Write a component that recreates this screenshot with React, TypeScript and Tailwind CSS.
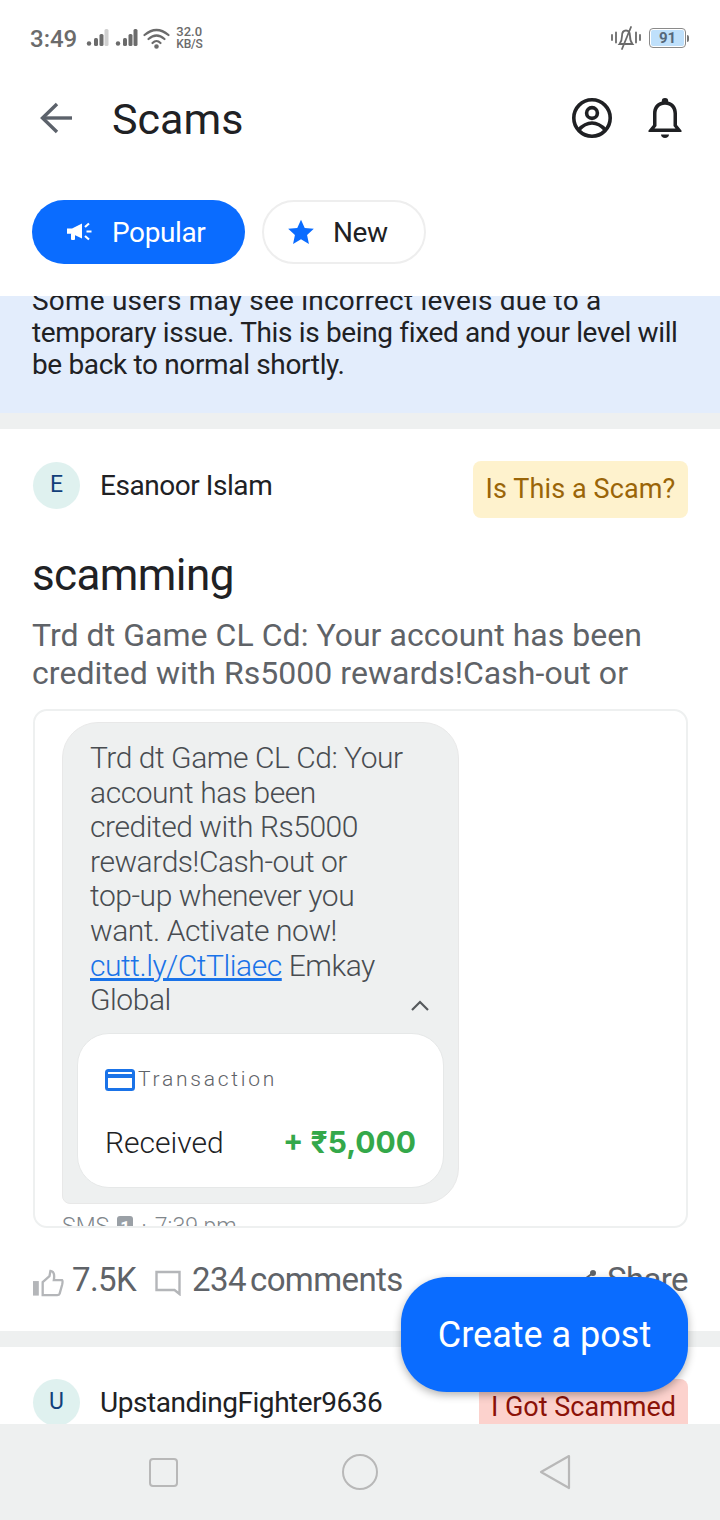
// App.tsx - Scams feed screen

function SignalBars({ dim }: { dim?: boolean }) {
  return (
    <svg width="23" height="18" viewBox="0 0 23 18" fill="none">
      <circle cx="3" cy="14.5" r="2.2" fill="#6b6b6b" />
      <rect x="8" y="9" width="4" height="8" rx="1.5" fill="#6b6b6b" />
      <rect x="13.5" y="5" width="4" height="12" rx="1.5" fill="#6b6b6b" />
      <rect x="18.5" y="0" width="4" height="17" rx="1.5" fill={dim ? "#d0d0d0" : "#6b6b6b"} />
    </svg>
  );
}

function StatusBar() {
  return (
    <div className="h-[76px] shrink-0 flex items-center justify-between pl-[30px] pr-[31px] text-[#6b6b6b]">
      <div className="flex items-center">
        <span className="text-[24px] font-medium mt-[1px]">3:49</span>
        <div className="ml-[9px]"><SignalBars dim /></div>
        <div className="ml-[6px]"><SignalBars /></div>
        <svg className="ml-[5px]" width="27" height="21" viewBox="0 0 27 21" fill="none" stroke="#6b6b6b" strokeWidth="2.2" strokeLinecap="round">
          <path d="M1.5 7 Q13.5 -3 25.5 7" />
          <path d="M5.5 11 Q13.5 4 21.5 11" />
          <path d="M9.5 15 Q13.5 11 17.5 15" />
          <circle cx="13.5" cy="18.5" r="1.2" fill="#6b6b6b" />
        </svg>
        <div className="ml-[6px] flex flex-col items-start text-[13px] font-medium leading-[13px]">
          <span>32.0</span>
          <span className="text-[12px] tracking-[-0.2px]">KB/S</span>
        </div>
      </div>
      <div className="flex items-center">
        <svg width="30" height="24" viewBox="0 0 30 24" fill="none" stroke="#6b6b6b" strokeWidth="1.8" strokeLinecap="round">
          <path d="M1 9v5M5 6.5v10M25 6.5v10M29 9v5" />
          <path d="M8.5 18 Q11 15 11 10 Q11 4.5 15 4.5 Q19 4.5 19 10 Q19 15 21.5 18 Z" />
          <path d="M20 1 L11 23" />
        </svg>
        <div className="ml-[8px] w-[37px] h-[20px] rounded-[4px] border border-[#8a8a8a] p-[1px]">
          <div className="w-full h-full rounded-[2px] bg-[#bfe0fb] flex items-center justify-center text-[15px] font-bold text-[#56687a] leading-none">91</div>
        </div>
        <div className="ml-[1px] w-[2px] h-[7px] bg-[#777] rounded-r" />
      </div>
    </div>
  );
}

function Header() {
  return (
    <div className="h-[84px] shrink-0 flex items-center pl-[39px] pr-[38px]">
      <svg width="34" height="34" viewBox="0 0 34 34" fill="none" stroke="#5c626b" strokeWidth="3.4">
        <path d="M33 17H4" />
        <path d="M18 3 L3.5 17 L18 31" />
      </svg>
      <h1 className="ml-[39px] mt-[3px] text-[43px] text-[#202124] font-normal leading-none">Scams</h1>
      <div className="ml-auto flex items-center gap-[36px]">
        <svg width="42" height="42" viewBox="0 0 42 42" fill="none" stroke="#1f2023" strokeWidth="3.6" className="ml-px">
          <circle cx="21" cy="21" r="18.2" />
          <circle cx="21" cy="16" r="5.4" />
          <path d="M7.5 33 Q14 26 21 26 Q28 26 34.5 33" />
        </svg>
        <svg width="34" height="42" viewBox="0 0 34 42" fill="#1f2023" className="-ml-[1px]">
          <path fillRule="evenodd" d="M17 1a3.2 3.2 0 0 1 3.2 3.4C26.5 6 29 11 29 16.5V28l4.5 5.500v1.500H.5v-1.500L5 28V16.500C5 11 7.500 6 13.800 4.400A3.200 3.200 0 0 1 17 1Zm0 6.700c-5.800 0-8.500 4-8.500 9V29l-2 2.500h21l-2-2.500V16.700c0-5-2.700-9-8.500-9Z" />
          <path d="M13 37.500h8c0 2-1.800 3.500-4 3.500s-4-1.500-4-3.500Z" />
        </svg>
      </div>
    </div>
  );
}

function Tabs() {
  return (
    <div className="h-[136px] shrink-0 pt-[40px] pl-[32px] flex items-start gap-[17px]">
      <button className="w-[213px] h-[64px] rounded-full bg-[#0a6cff] text-white flex items-center pl-[34px] text-[28px] tracking-[-0.4px]">
        <svg width="28" height="24" viewBox="0 0 28 24" fill="white">
          <path d="M1 8.500h5l10-5v15l-10-4.800H1Z" />
          <rect x="5" y="13" width="4" height="7" rx="1" />
          <path d="M19 7 L23 3.500M20.500 11.500h5M19 16 L23 19.500" stroke="white" strokeWidth="2.200" fill="none" />
        </svg>
        <span className="ml-[18px] mt-[2px]">Popular</span>
      </button>
      <button className="w-[164px] h-[64px] rounded-full bg-white border-2 border-[#eeeeee] flex items-center pl-[22px] text-[28px] tracking-[-0.4px] text-[#202124]">
        <svg width="30" height="28" viewBox="0 0 24 24" fill="#0a6cff">
          <path d="M12 1.500l3.200 7 7.800.8-5.800 5.200 1.600 7.700L12 18.300l-6.800 3.900 1.600-7.700L1 9.300l7.800-.8Z" />
        </svg>
        <span className="ml-[17px] mt-[2px]">New</span>
      </button>
    </div>
  );
}

function Avatar({ letter }: { letter: string }) {
  return (
    <div className="w-[47px] h-[47px] shrink-0 rounded-full bg-[#dff1ef] flex items-center justify-center text-[23px] text-[#123f7a]">
      {letter}
    </div>
  );
}

function ScamPost() {
  return (
    <div className="bg-white px-[32px] pt-[32px] pb-[31px]">
      <div className="flex items-start">
        <div className="mt-[1px] ml-px"><Avatar letter="E" /></div>
        <span className="ml-[20px] mt-[7px] text-[28px] leading-[36px] tracking-[-0.45px] text-[#202124]">Esanoor Islam</span>
        <span className="ml-auto w-[215px] h-[57px] rounded-[8px] bg-[#fef2cd] text-[#9a6508] text-[27px] tracking-[0.1px] flex items-center justify-center">Is This a Scam?</span>
      </div>
      <h2 className="mt-[30px] text-[44px] leading-[54px] tracking-[-0.6px] text-[#202124] font-normal">scamming</h2>
      <p className="mt-[14px] text-[32px] leading-[38px] tracking-[0.04px] text-[#5f6368]">
        Trd dt Game CL Cd: Your account has been credited with Rs5000 rewards!Cash-out or
      </p>
      <div className="mt-[17px] ml-px h-[519px] overflow-hidden rounded-[14px] border-2 border-[#eef0f0] pl-[27px] pt-[11px]">
        <div className="w-[397px] h-[482px] rounded-[36px] rounded-bl-[8px] bg-[#eef0f0] border border-[#e8e8e8] px-[14px] pt-[18px]">
          <p className="pl-[13px] pr-[28px] font-['Roboto'] font-light text-[30px] leading-[34.6px] tracking-[-0.45px] text-[#484c50]">
            Trd dt Game CL Cd: Your account has been credited with Rs5000 rewards!Cash-out or <span className="whitespace-nowrap">top-up</span> whenever you want. Activate now!{" "}
            <span className="text-[#1a73e8] underline">cutt.ly/CtTliaec</span> Emkay Global
          </p>
          <div className="flex justify-end pr-[14px] -mt-[19px]">
            <svg width="20" height="12" viewBox="0 0 20 12" fill="none" stroke="#55595c" strokeWidth="2.200">
              <path d="M2 11 L10 3 L18 11" />
            </svg>
          </div>
          <div className="mt-[22px] h-[155px] rounded-[32px] bg-white border border-[#e6e8e8] px-[27px] pt-[30px]">
            <div className="flex items-center">
              <svg width="30" height="22" viewBox="0 0 30 22">
                <rect x="1.500" y="1.500" width="27" height="19" rx="2" fill="white" stroke="#1a73e8" strokeWidth="3" />
                <rect x="1.500" y="5" width="27" height="4" fill="#1a73e8" />
              </svg>
              <span className="ml-[3px] font-['Roboto'] font-light text-[21px] tracking-[2.750px] text-[#5f6368]">Transaction</span>
            </div>
            <div className="mt-[25px] flex items-center justify-between">
              <span className="font-['Roboto'] font-light text-[30px] text-[#202124]">Received</span>
              <span className="font-['Inter'] font-bold text-[30px] text-[#34a84a]">+ ₹5,000</span>
            </div>
          </div>
        </div>
        <div className="mt-[9px] font-['Roboto'] font-light text-[23px] leading-[28px] text-[#80868b] flex items-center">
          SMS <span className="mx-[8px] w-[16px] h-[22px] rounded-[3px] bg-[#9aa0a6] text-white text-[17px] font-bold flex items-center justify-center">1</span> · <span className="ml-[8px]">7:39 pm</span>
        </div>
      </div>
      <div className="mt-[32px] flex items-center text-[33px] leading-[40px] tracking-[-0.6px] text-[#5f6368]">
        <svg width="31" height="28" viewBox="0 0 32 28" fill="none" className="mt-[6px] ml-px">
          <rect x="0" y="12" width="6" height="15" fill="#b4b6b9" />
          <path d="M10 13 L17 7 L18 1.500 Q23 2 21.500 11 H30 Q31 12 30 16 L27.500 25 Q27 26.500 25 26.500 H10 Z" stroke="#b4b6b9" strokeWidth="2.400" />
        </svg>
        <span className="ml-[8px]">7.5K</span>
        <svg width="26" height="26" viewBox="0 0 26 26" fill="none" stroke="#b4b6b9" strokeWidth="2.400" className="ml-[19px] mt-[6px]">
          <path d="M1.500 2 H24.500 V24 L19.500 20 H1.500 Z" />
        </svg>
        <span className="ml-[11px]">234</span>
        <span className="ml-[4px]">comments</span>
        <span className="ml-auto flex items-center">
          <svg width="20" height="24" viewBox="0 0 20 24" fill="#5f6368" stroke="#5f6368" strokeWidth="2" className="mr-[9px]">
            <path d="M4 13 L15 5 M4 13 L15 21" fill="none" />
            <circle cx="15" cy="5" r="2" />
            <circle cx="4" cy="13" r="2" />
            <circle cx="15" cy="21" r="2" />
          </svg>
          Share
        </span>
      </div>
    </div>
  );
}

function SecondPost() {
  return (
    <div className="bg-white px-[32px] pt-[32px]">
      <div className="flex items-start">
        <div className="ml-px"><Avatar letter="U" /></div>
        <span className="ml-[20px] mt-[6px] text-[28px] leading-[36px] tracking-[-0.45px] text-[#202124]">UpstandingFighter9636</span>
        <span className="ml-auto w-[209px] h-[57px] rounded-[8px] bg-[#fcd2cd] text-[#8b1208] text-[27px] flex items-center justify-center">I Got Scammed</span>
      </div>
      <div className="h-[60px]" />
    </div>
  );
}

function NavBar() {
  return (
    <div className="h-[96px] shrink-0 bg-[#eef0f0] flex items-center pl-[149px]">
      <div className="w-[29px] h-[29px] rounded-[4px] border-2 border-[#b8b8b8]" />
      <div className="ml-[164px] w-[36px] h-[36px] rounded-full border-2 border-[#b8b8b8]" />
      <svg width="32" height="36" viewBox="0 0 32 36" fill="none" stroke="#b8b8b8" strokeWidth="2.200" strokeLinejoin="round" className="ml-[161px]">
        <path d="M30 2 L2 18 L30 34 Z" />
      </svg>
    </div>
  );
}

export default function App() {
  return (
    <div className="relative w-[720px] h-[1520px] overflow-hidden bg-white flex flex-col font-['Roboto',sans-serif]">
      <StatusBar />
      <Header />
      <Tabs />

      {/* feed is scrolled a little, the banner's first line is cut off */}
      <div className="flex-1 min-h-0 overflow-hidden bg-[#eef0f0]">
        <div className="-mt-[20px]">
          <div className="bg-[#e3edfc] h-[137px] pl-[32px] pt-[9px] pr-[20px] text-[28px] leading-[32px] tracking-[-0.35px] text-[#202124]">
            <p>
              <span className="tracking-[0.2px]">Some users may see incorrect levels due to a</span> temporary issue. This is being fixed and your level will be back to normal shortly.
            </p>
          </div>
          <div className="h-[16px]" />
          <ScamPost />
          <div className="h-[16px]" />
          <SecondPost />
        </div>
      </div>

      <NavBar />

      <button className="absolute left-[401px] top-[1277px] w-[287px] h-[115px] rounded-[46px] bg-[#0a6cff] text-white text-[36px] shadow-[0_3px_8px_rgba(0,0,0,0.3)]">
        Create a post
      </button>
    </div>
  );
}
